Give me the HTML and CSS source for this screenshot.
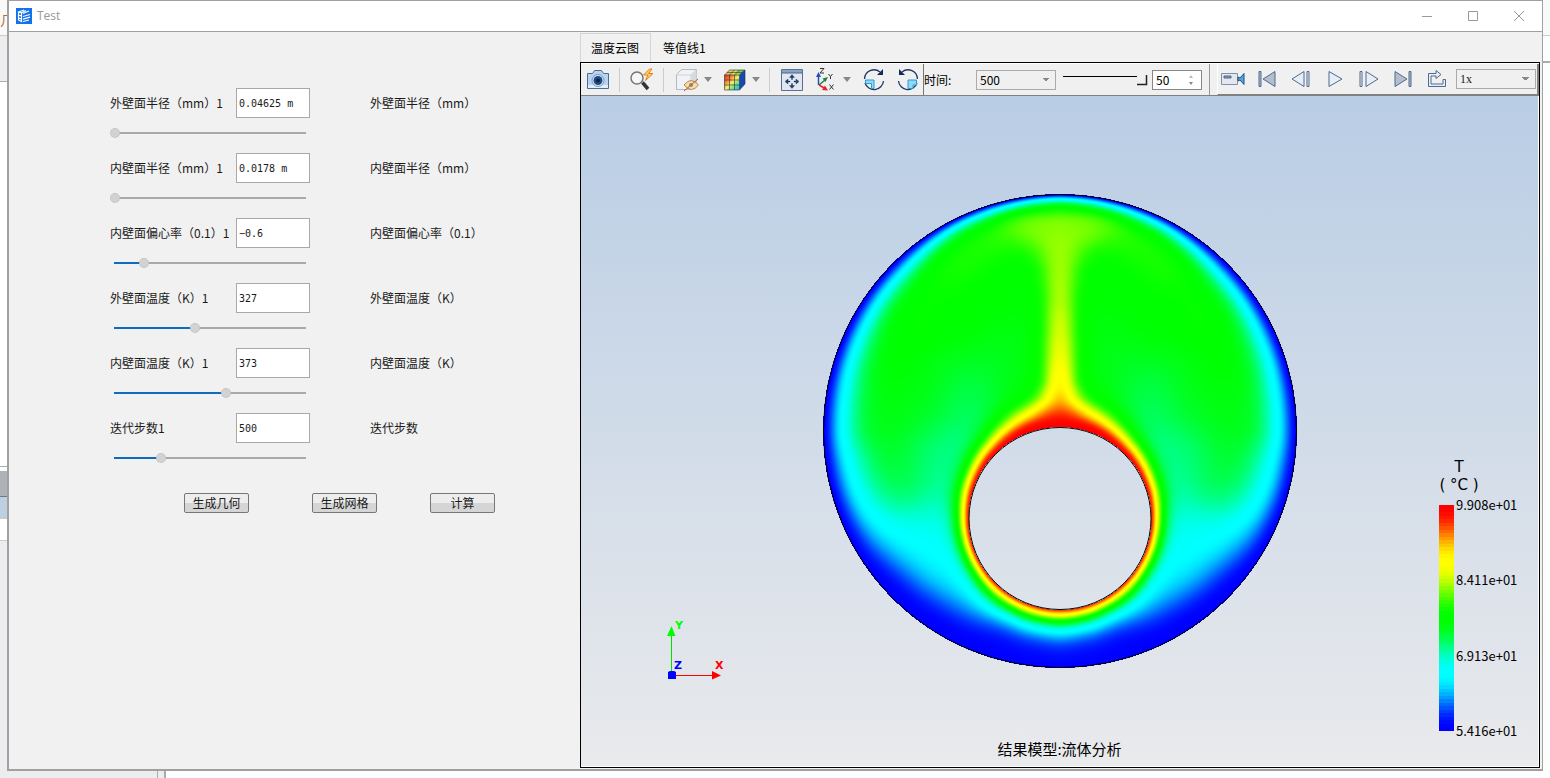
FILE: index.html
```html
<!DOCTYPE html>
<html lang="zh-CN">
<head>
<meta charset="utf-8">
<title>Test</title>
<link rel="stylesheet" href="styles.css">
</head>
<body>
<div class="desktop">
  <div class="edge-left">
    <div class="edge-head">几</div><div class="edge-band"></div><div class="edge-blank"></div>
    <div class="edge-dark"></div><div class="edge-blue"></div><div class="edge-row"></div><div class="edge-rest"></div>
  </div>
  <main class="window">
    <header class="titlebar">
      <svg class="logo" viewBox="0 0 16 16"><rect width="16" height="16" fill="#1272e8"/><path d="M2.500 4v8l3 1.500V5zM7 5.500l6-2.500M7 8.500l7-2M7 11.200l7-2M7 13.500l6-1.500M2.500 4L8 2M5 5l5-2.500M2.500 7l3 1M2.500 10l3 1" fill="none" stroke="#fff" stroke-width="1.200"/></svg>
      <h1 class="title">Test</h1>
      <button class="win-btn" aria-label="最小化"><svg viewBox="0 0 12 12"><path d="M1 6.500h10"/></svg></button>
      <button class="win-btn" aria-label="最大化"><svg viewBox="0 0 12 12"><path d="M1.500 1.500h9v9h-9z"/></svg></button>
      <button class="win-btn" aria-label="关闭"><svg viewBox="0 0 12 12"><path d="M1 1l10 10M11 1L1 11"/></svg></button>
    </header>
    <div class="content">
      <form class="params">
        <div class="param"><label for="p1">外壁面半径（mm）1</label><input class="field" id="p1" value="0.04625 m"><span>外壁面半径（mm）</span><input class="slider" type="range" aria-label="外壁面半径" max="1000" value="0" style="--fill:0%"></div>
        <div class="param"><label for="p2">内壁面半径（mm）1</label><input class="field" id="p2" value="0.0178 m"><span>内壁面半径（mm）</span><input class="slider" type="range" aria-label="内壁面半径" max="1000" value="0" style="--fill:0%"></div>
        <div class="param"><label for="p3">内壁面偏心率（0.1）1</label><input class="field" id="p3" value="−0.6"><span>内壁面偏心率（0.1）</span><input class="slider" type="range" aria-label="内壁面偏心率" max="1000" value="153" style="--fill:15%"></div>
        <div class="param"><label for="p4">外壁面温度（K）1</label><input class="field" id="p4" value="327"><span>外壁面温度（K）</span><input class="slider" type="range" aria-label="外壁面温度" max="1000" value="420" style="--fill:42%"></div>
        <div class="param"><label for="p5">内壁面温度（K）1</label><input class="field" id="p5" value="373"><span>内壁面温度（K）</span><input class="slider" type="range" aria-label="内壁面温度" max="1000" value="584" style="--fill:58%"></div>
        <div class="param"><label for="p6">迭代步数1</label><input class="field" id="p6" value="500"><span>迭代步数</span><input class="slider" type="range" aria-label="迭代步数" max="1000" value="242" style="--fill:24%"></div>
        <div class="actions"><button type="button">生成几何</button><button type="button">生成网格</button><button type="button">计算</button></div>
      </form>
      <section class="results">
        <nav class="tabs"><button class="tab tab-on">温度云图</button><button class="tab">等值线1</button></nav>
        <div class="panel">
          <div class="toolbar">
            <div class="tools">
              <button class="tool" aria-label="截图"><svg viewBox="0 0 24 24"><path d="M1.500 5.500h5l2-3h7l2 3h5v15h-21z" fill="#b9d3ee" stroke="#486b9c"/><path d="M2 17h20v3H2z" fill="#e3edf8"/><circle cx="12" cy="12.500" r="6" fill="#dfeaf6" stroke="#7894bb"/><circle cx="12" cy="12.500" r="4.500" fill="#1d4b86"/><circle cx="12" cy="12.500" r="2" fill="#0b2347"/></svg></button>
              <i class="sep sep-a"></i>
              <button class="tool" aria-label="快速缩放"><svg viewBox="0 0 24 24"><path d="M12.500 14.500l5.500 6.500" stroke="#333" stroke-width="3.500"/><circle cx="7" cy="10" r="6" fill="#f4f6f8" stroke="#777" stroke-width="1.500"/><path d="M19.500 1l-6 6h4.500l-2.500 5.500 7.500-7h-4.500L22 1z" fill="#ffd060" stroke="#e77e16"/></svg></button>
              <i class="sep sep-b"></i>
              <button class="tool" aria-label="显示隐藏"><svg viewBox="0 0 24 24"><path d="M1.500 6.500l5-5h15v14l-5 6h-15z" fill="#f1f2f5" stroke="#b4bac4"/><path d="M2 7h14v14M16 7l5-5" fill="none" stroke="#cdd1d8"/><path d="M16.500 7l5-5v14l-5 5z" fill="#d5d9e0"/><path d="M9 17q7-9 14.500 0-7 9-14.500 0z" fill="#f6dca6" stroke="#b08c50"/><circle cx="16" cy="17" r="2" fill="#8090a0"/><path d="M9 23L23 11" stroke="#c9541d"/></svg></button><span class="caret"></span>
              <button class="tool" aria-label="云图"><svg viewBox="0 0 24 24"><defs><linearGradient id="rainbow" x1="0" y1="0" x2="1" y2="1"><stop stop-color="#e0301c"/><stop offset=".25" stop-color="#ff6b32"/><stop offset=".5" stop-color="#f8f060"/><stop offset=".75" stop-color="#5fd99a"/><stop offset="1" stop-color="#28a3e8"/></linearGradient><linearGradient id="rainbow-top"><stop stop-color="#ffb04c"/><stop offset=".5" stop-color="#d8e858"/><stop offset="1" stop-color="#38b050"/></linearGradient></defs><path d="M1.500 7h15v15h-15z" fill="url(#rainbow)"/><path d="M1.500 7l5-5h15.500l-5.500 5z" fill="url(#rainbow-top)"/><path d="M16.500 7L22 2v14l-5.500 6z" fill="#1848b8"/><path d="M1.500 7h15v15h-15zL6.500 2H22v14l-5.500 6M16.500 7L22 2M6.500 7v15M11.500 7v15M1.500 12h15M1.500 17h15M6.500 7l5-5M11.500 7l5-5M4 4.500h15.500" fill="none" stroke="#20303a" stroke-width=".6"/></svg></button><span class="caret"></span>
              <i class="sep sep-c"></i>
              <button class="tool" aria-label="适合窗口"><svg viewBox="0 0 24 24"><path d="M1.500 1.500h21v21h-21z" fill="#e0e7f0" stroke="#587092"/><path d="M2 2h20v3H2z" fill="#8aa4c6"/><path d="M2 5h20" stroke="#4a648c"/><path d="M12 6.500l2.500 3h-5zM12 20.500l2.500-3h-5zM5 13.500l3-2.500v5zM19 13.500l-3-2.500v5zM11.500 9h1v2.500h-1zM11.500 15.500h1V18h-1zM7.500 13h2.500v1H7.500zM14 13h2.500v1H14z" fill="#20395f" stroke="#20395f" stroke-width=".4"/></svg></button>
              <button class="tool" aria-label="坐标视图"><svg viewBox="0 0 24 24"><path d="M4.500 17V6" stroke="#2450bd" stroke-width="1.500"/><path d="M2 9l2.500-5L7 9z" fill="#2450bd"/><path d="M5 17l6-5" stroke="#20803c" stroke-width="1.500"/><path d="M8.500 10.500l5.500-1.500-2.500 5z" fill="#20803c"/><path d="M5 17l6 3.500" stroke="#e0262a" stroke-width="1.500"/><path d="M11 17.500l3 5-6-.5z" fill="#e0262a"/><path d="M6 .5h4l-4 4.500h4M14.500 6l2 2.500 2-2.500M16.500 8.500V11M15.500 16.500l4 5M19.500 16.500l-4 5" fill="none" stroke="#333"/></svg></button><span class="caret"></span>
              <button class="tool" aria-label="顺时针旋转"><svg viewBox="0 0 24 24"><path d="M18 4A9.500 9.500 0 0 0 2.500 11M3 15A9.500 9.500 0 0 0 21.500 13" fill="none" stroke="#1f3864" stroke-width="1.300"/><path d="M15 7h6V1z" fill="#102c5c"/><path d="M3.500 12H12v8.500H9.500v-5h-6z" fill="#8fd8f8" stroke="#2b9ad6"/></svg></button>
              <button class="tool" aria-label="逆时针旋转"><svg viewBox="0 0 24 24"><path d="M6 4A9.500 9.500 0 0 1 21.500 11M21 15A9.500 9.500 0 0 1 2.500 13" fill="none" stroke="#1f3864" stroke-width="1.300"/><path d="M9 7H3V1z" fill="#102c5c"/><path d="M20.500 12H12v8.500h5v-3.500h3.500z" fill="#8fd8f8" stroke="#2b9ad6"/></svg></button>
            </div>
            <div class="timing">
              <label for="time">时间:</label>
              <select class="select time" id="time"><option>500</option></select>
              <svg class="speed" viewBox="0 0 86 14"><path d="M0 3.500h74" stroke="#000"/><path d="M74 11.500h9.500V2" fill="none" stroke="#222" stroke-width="1.500"/></svg>
              <span class="spin"><input aria-label="帧数" value="50"><span class="spin-arrows"><i></i><i></i></span></span>
            </div>
            <div class="player">
              <button class="tool" aria-label="录制"><svg viewBox="0 0 24 24"><path d="M.5 6.500h16v11H.5z" fill="#e3e8ef" stroke="#8090a8"/><path d="M3 9h7v2H3z" fill="#8798b1"/><path d="M17 10l2 1 4-4.500v11L19 13l-2 1z" fill="#51a8dc" stroke="#214f83"/></svg></button>
              <button class="tool" aria-label="首帧"><svg viewBox="0 0 24 24"><path d="M4 4.500h2v15H4zM20 4.500v15L8 12z"/></svg></button>
              <button class="tool step" aria-label="后退"><svg viewBox="0 0 24 24"><path d="M15 4.500v15L3 12zM18 4.500h2v15h-2z"/></svg></button>
              <button class="tool step" aria-label="播放"><svg viewBox="0 0 24 24"><path d="M6 4.500L19 12 6 19.500z"/></svg></button>
              <button class="tool step" aria-label="前进"><svg viewBox="0 0 24 24"><path d="M3 4.500h2v15H3zM9 4.500L21 12 9 19.500z"/></svg></button>
              <button class="tool" aria-label="末帧"><svg viewBox="0 0 24 24"><path d="M4 4.500v15L16 12zM18 4.500h2v15h-2z"/></svg></button>
              <button class="tool step" aria-label="循环"><svg viewBox="0 0 24 24"><path d="M3.500 6.500v13h17v-7h-2.500v4.500H6V9h5v2.500l5-4-5-4V6.500z"/></svg></button>
              <select class="select rate" aria-label="速度"><option>1x</option></select>
            </div>
          </div>
          <div class="viewport">
            <canvas class="field-map" id="field-map" width="476" height="476"></canvas>
            <svg class="axes" viewBox="0 0 60 64"><path d="M5.500 56V12" stroke="#00e000"/><path d="M1 17L5.500 7l4 10z" fill="#0f0"/><path d="M6 56.500h42" stroke="#f00"/><path d="M46 52l9 4.500-9 4z" fill="#f00"/><path d="M2 53l2-1h4l2 1v7H2z" fill="#00f"/><text x="9" y="10" fill="#0f0">Y</text><text x="8" y="50" fill="#00f">Z</text><text x="49" y="50" fill="#f00">X</text></svg>
            <div class="legend">
              <div class="legend-title"><div>T</div><div>( °C )</div></div>
              <div class="legend-body"><canvas class="bar" id="bar" width="15" height="226"></canvas>
              <div class="ticks"><span>9.908e+01</span><span>8.411e+01</span><span>6.913e+01</span><span>5.416e+01</span></div></div>
            </div>
            <div class="caption">结果模型:流体分析</div>
          </div>
        </div>
      </section>
    </div>
  </main>
  <div class="edge-right"><div class="edge-head"></div><div class="edge-mid"></div></div>
  <div class="edge-bottom"><i></i></div>
</div>
<script src="field.js"></script>
</body>
</html>
```
FILE: styles.css
```css
* { box-sizing: border-box; }
body { margin: 0; font: 12px/16px "Noto Sans CJK SC", sans-serif; color: #1a1a1a; }
button, input, select { font: inherit; color: inherit; margin: 0; }
button { padding: 0; border: 0; background: none; }
.desktop { display: grid; grid-template: minmax(0, 1fr) 7px / 7px minmax(0, 1fr) 7px; height: 100vh; background: #fff; overflow: hidden; }
.edge-left { display: flex; flex-direction: column; overflow: hidden; background: #fff; }
.edge-head { height: 36px; padding-top: 12px; background: #f9f9f9; border-bottom: 1px solid #ccc; font-size: 13px; color: #b56a2a; }
.edge-band { height: 46px; background: #ebedef; border-bottom: 1px solid #a8adb1; }
.edge-blank { height: 385px; border-bottom: 1px solid #a8adb1; }
.edge-dark { height: 26px; margin-top: 4px; background: #adb2b6; border-bottom: 1px solid #777; }
.edge-blue { height: 22px; background: #bcd0e2; border-bottom: 1px solid #ccc; }
.edge-row { height: 22px; border-bottom: 1px solid #ccc; }
.edge-rest { flex: 1; background: #ebedef; }
.edge-mid { height: 27px; border-bottom: 2px solid #aaa; }
.edge-bottom { grid-column: 1 / 4; display: flex; }
.edge-bottom::before { content: ""; width: 157px; background: #ebedef; border-right: 1px solid #a8adb1; }
.edge-bottom i { width: 8px; background: #ebedef; border-right: 2px solid #aaa; }

.window { display: flex; flex-direction: column; min-width: 0; border: 2px solid #a0a0a0; border-width: 1px 1px 2px 2px; background: #f1f1f1; }
.titlebar { display: flex; align-items: center; height: 31px; padding-left: 7px; background: #fff; border-bottom: 1px solid #a0a0a0; }
.logo { width: 16px; height: 16px; }
.title { flex: 1; margin: 0 0 0 5px; font: 12px/16px "Open Sans", sans-serif; color: #999; }
.win-btn { display: grid; place-items: center; width: 46px; height: 30px; }
.win-btn svg { width: 12px; height: 12px; fill: none; stroke: #999; }
.content { display: flex; flex: 1; min-height: 0; }

.params { display: flex; flex-direction: column; gap: 15px; flex: 0 0 571px; padding: 56px 0 0 101px; }
.param { display: grid; grid-template-columns: 126px 74px 1fr; row-gap: 10px; align-items: center; white-space: nowrap; }
.param span { padding-left: 60px; }
.field { width: 74px; height: 30px; padding: 0 2px; border: 1px solid #a9a9a9; border-radius: 0; background: #fff; font: 10px/14px "DejaVu Sans Mono", monospace; }
.slider { grid-column: 1 / 3; appearance: none; width: 200px; height: 10px; background: linear-gradient(90deg, #0f6cbd var(--fill), #a9a9a9 var(--fill)) center / 192px 2px no-repeat; }
.slider::-webkit-slider-thumb { appearance: none; width: 10px; height: 10px; border: 1px dotted #bbb; border-radius: 50%; background: #d2d2d2; }
.actions { display: flex; margin: 15px 0 0 74px; }
.actions button { width: 65px; height: 20px; border: 1px solid #777; border-radius: 2px; background: linear-gradient(#ededed 50%, #d5d5d5 50%); line-height: 18px; }
.actions button:nth-child(2) { margin: 0 53px 0 63px; }

.results { display: flex; flex-direction: column; flex: 1; min-width: 0; padding: 1px 2px 1px 0; }
.tabs { display: flex; height: 29px; }
.tab { padding: 0 12px; color: #000; }
.tab-on { padding: 0 11px 0 10px; border: 1px solid #d5d5d5; border-bottom: 0; }
.panel { display: flex; flex-direction: column; flex: 1; min-height: 0; border: 1px solid #000; }
.toolbar { display: flex; height: 33px; background: #f0f0f0; border-top: 1px solid #fff; border-bottom: 1px solid #808080; }
.tools, .timing, .player { display: flex; align-items: center; }
.tools { flex: 0 0 343px; padding-left: 5px; border-right: 1px solid #777; }
.tool { flex: none; width: 24px; height: 24px; }
.tool svg { display: block; width: 24px; height: 24px; fill: none; }
.sep { flex: none; width: 1px; height: 24px; background: #ccc; }
.sep-a { margin: 0 10px 0 9px; }
.sep-b { margin: 0 11px 0 9px; }
.sep-c { margin: 0 10px 0 -4px; }
.caret { margin: 0 13px 0 5px; border: 4px solid transparent; border-top: 5px solid #888; border-bottom: 0; }
.caret + .tool { margin-left: -2px; }
.tool + .tool { margin-left: 10px; }
.timing { flex: 0 0 286px; border-right: 1px solid #999; color: #000; }
.timing label { width: 52px; }
.select { appearance: none; border: 1px solid #aaa; border-radius: 0; height: 20px; padding: 0 3px; background: linear-gradient(135deg, #888 50%, transparent 50%) right 5px center / 4px 4px no-repeat, linear-gradient(225deg, #888 50%, transparent 50%) right 9px center / 4px 4px no-repeat, #f0f0f0; }
.time { width: 80px; }
.speed { width: 86px; height: 14px; margin: 0 3px 0 7px; }
.spin { display: flex; width: 50px; height: 20px; border: 1px solid #888; background: #fff; }
.spin input { width: 36px; padding: 0 3px; border: 0; background: none; }
.spin-arrows { display: flex; flex-direction: column; justify-content: center; gap: 4px; }
.spin-arrows i { border: 2px solid transparent; border-top: 0; border-bottom: 3px solid #bbb; }
.spin-arrows i + i { border-top: 3px solid #888; border-bottom: 0; }
.player { flex: 1; min-width: 0; margin-left: 7px; padding-left: 3px; border-left: 1px solid #fff; border-right: 2px solid #808080; border-bottom: 1px solid #808080; }
.player .tool svg { fill: #b5bec9; stroke: #4f6a90; }
.player .step svg { fill: #e8eef5; }
.player .rate { flex: 1; min-width: 0; max-width: 80px; margin-left: 7px; font-family: "Liberation Serif", serif; }

.viewport { position: relative; display: grid; place-items: center; flex: 1; min-height: 0; background: linear-gradient(#b9cde5, #e9eaec); border: solid #fff; border-width: 0 1px 1px 0; }
.field-map { width: 476px; height: 476px; }
.axes { position: absolute; left: 85px; bottom: 83px; width: 60px; height: 64px; font: bold 11px "DejaVu Sans", sans-serif; }
.legend { position: absolute; right: 14px; bottom: 27px; width: 86px; color: #000; }
.legend-title { width: 42px; margin-bottom: 3px; font: 15px/18px "DejaVu Sans", sans-serif; text-align: center; white-space: nowrap; }
.legend-body { display: flex; align-items: center; margin: 0 0 0 1px; gap: 2px; }
.bar { width: 15px; height: 226px; }
.ticks { display: flex; flex-direction: column; justify-content: space-between; height: 242px; font-size: 13px; }
.caption { position: absolute; left: 0; right: 0; bottom: 6px; text-align: center; font-size: 15px; line-height: 22px; color: #000; }
```
FILE: field.js
```js
const STOPS = [[0, 0, 255], [0, 255, 255], [0, 255, 0], [255, 255, 0], [255, 0, 0]];
function colour(t) {
  const v = Math.min(3.9999, Math.max(0, t * 4)), i = Math.floor(v), f = v - i, k = f * f * (3 - 2 * f);
  return STOPS[i].map((c, n) => Math.round(c + (STOPS[i + 1][n] - c) * k));
}
// Eased lookup: rows of [key, value, value...].
function lookup(rows, x) {
  if (x <= rows[0][0]) return rows[0].slice(1);
  for (let i = 1; i < rows.length; i++) {
    if (x <= rows[i][0]) {
      const a = rows[i - 1], b = rows[i], f = (x - a[0]) / (b[0] - a[0]), k = (f + f * f * (3 - 2 * f)) / 2;
      return a.slice(1).map((v, n) => v + (b[n + 1] - v) * k);
    }
  }
  return rows[rows.length - 1].slice(1);
}
// Core temperature samples: x from the axis, y from the top, in thirds of a pixel.
const CORE = [[0,90,.6],[100,110,.62],[200,150,.595],[300,150,.57],[350,250,.56],[250,220,.54],[150,270,.49],[0,300,.5],[100,320,.49],
[450,400,.53],[300,380,.505],[200,380,.49],[120,450,.46],[0,500,.5],[160,500,.45],[280,500,.47],[200,600,.42],[250,700,.385],[300,620,.41],[400,600,.475],[550,550,.5],
[390,720,.425],[480,700,.475],[500,850,.465],[490,940,.45],[420,930,.4],[400,830,.4],[450,1030,.36],[400,1050,.29],[450,1100,.27],[380,1120,.25],
[350,1000,.3],[330,900,.345],[300,820,.36],[350,850,.36],[330,1100,.25],[350,1180,.25],[450,1180,.24],[250,1250,.25],
[150,1320,.14],[0,1380,0],[0,1300,.05],[100,1400,.02],[560,1000,.4],[600,900,.44],[620,700,.5],[600,500,.52],[250,1150,.26],
[280,950,.33],[270,1050,.28],[120,650,.48],[150,750,.45],[0,700,.5],[100,600,.47],[530,1100,.28],[600,300,.53]];
const OUTER = [[0,8.5,1.3],[25,12,1.3],[45,19,1.35],[90,26,1.3],[120,32,1.3],[135,37,1.8],[150,42,2],[180,44,2]];
// Each row: angle, thickness, exponent, wall temperature.
const INNER = [[0,24,1.6,1],[20,20,1.8,1],[45,15,1.6,.98],[70,12.5,1.5,.96],[90,11,1.4,.94],[120,11,1.3,.93],[150,14,1.2,.93],[165,16,1.2,.93],[180,17,1.2,.93]];
const PLUME = [[90,.6,160],[130,.63,130],[200,.64,85],[280,.645,62],[350,.65,54],[450,.68,52],[500,.7,52],[600,.745,50],[650,.76,56],[700,.77,80],[760,.77,85]];
function core(x, y) {
  let sum = 0, total = 0;
  for (const [cx, cy, v] of CORE) {
    const dy2 = (cy - y) ** 2;
    const w = Math.exp(-((cx - x) ** 2 + dy2) / 8000) + Math.exp(-((cx + x) ** 2 + dy2) / 8000) + 1e-6;
    sum += w * v; total += w;
  }
  return sum / total;
}
const C = 238, R = 237, HOLE = 91.5, HOLE_Y = 325.5;
const canvas = document.getElementById("field-map"), ctx = canvas.getContext("2d");
const image = ctx.createImageData(476, 476);
for (let py = 0; py < 476; py++) for (let px = 0; px <= C; px++) {
  const x = Math.abs(px + .5 - C), y = py + .5;
  const ro = Math.hypot(x, y - C), ri = Math.hypot(x, y - HOLE_Y);
  if (ro > R || ri < HOLE) continue;
  const zx = x * 3, zy = (y + 13) * 3, deg = 180 / Math.PI;
  let t = core(zx, zy);
  if (zy < 800) {
    const [p, w] = lookup(PLUME, zy);
    t += (p - t) * Math.exp(-((zx / w) ** 2));
  }
  const [od, op] = lookup(OUTER, Math.atan2(x, C - y) * deg);
  t *= 1 - Math.exp(-(((R - ro) / od) ** op));
  const [id, ip, hot] = lookup(INNER, Math.atan2(x, HOLE_Y - y) * deg);
  t += (hot - t) * Math.exp(-(((ri - HOLE) / id) ** ip));
  const rgb = colour(t);
  for (const qx of [px, 475 - px]) image.data.set([...rgb, 255], (py * 476 + qx) * 4);
}
ctx.putImageData(image, 0, 0);
ctx.strokeStyle = "#000";
for (const [cy, r] of [[C, R - .5], [HOLE_Y, HOLE - .5]]) {
  ctx.beginPath(); ctx.arc(C, cy, r, 0, 7); ctx.stroke();
}
const bar = document.getElementById("bar").getContext("2d");
for (let i = 0; i < 64; i++) {
  bar.fillStyle = `rgb(${colour(1 - i / 63)})`;
  bar.fillRect(0, Math.round(i * 226 / 64), 15, 5);
}
```
